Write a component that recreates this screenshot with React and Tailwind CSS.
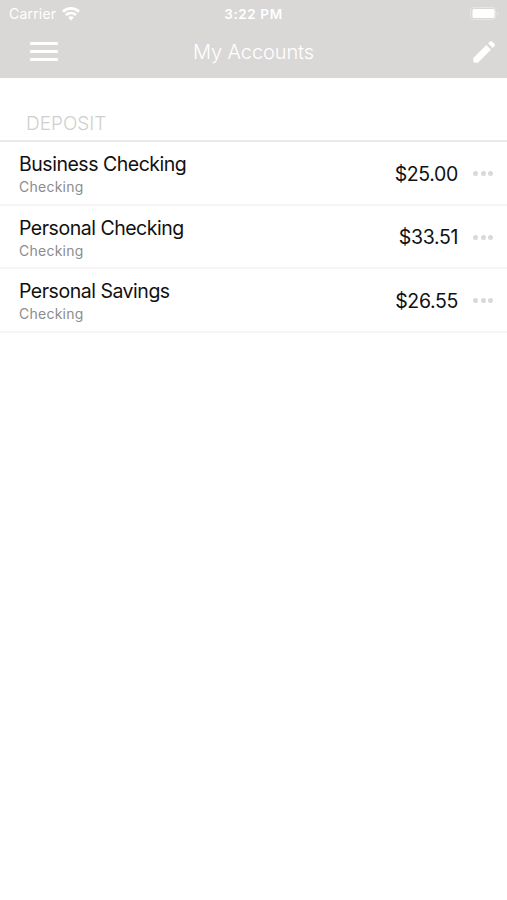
const accounts = [
    { id: 1, name: "Business Checking", type: "Checking", balance: "$25.00" },
    { id: 2, name: "Personal Checking", type: "Checking", balance: "$33.51" },
    { id: 3, name: "Personal Savings", type: "Checking", balance: "$26.55" },
];

function WifiIcon() {
    return (
        <svg width="18" height="14" viewBox="0 0 18 14" fill="none" stroke="white" strokeWidth="2.6">
            <path d="M1 4.7a11.4 11.4 0 0 1 16 0" />
            <path d="M4 8a7.1 7.1 0 0 1 10 0" />
            <path d="M9 13.4 6.2 10.6a4 4 0 0 1 5.6 0z" fill="white" stroke="none" />
        </svg>
    );
}

function BatteryIcon() {
    return (
        <svg width="30" height="14" viewBox="0 0 30 14">
            <rect x="0.5" y="0.5" width="25" height="12" rx="3" fill="none" stroke="white" strokeOpacity="0.35" />
            <rect x="2.5" y="2" width="22" height="9" rx="1.5" fill="white" />
            <path d="M27 4.5c1.6.6 1.6 3.4 0 4z" fill="white" fillOpacity="0.35" />
        </svg>
    );
}

function PencilIcon() {
    return (
        <svg width="24" height="24" viewBox="0 0 24 24" fill="white">
            <path d="M1.8 17.6 14.3 5.1l4.6 4.6L6.4 22.2a2 2 0 0 1-1.4.6H3.2a2 2 0 0 1-2-2V19a2 2 0 0 1 .6-1.4z" />
            <path d="M16.1 3.3 18 1.4a1.5 1.5 0 0 1 2.1 0l2.5 2.5a1.5 1.5 0 0 1 0 2.1l-1.9 1.9z" />
        </svg>
    );
}

function AccountRow({ account }) {
    return (
        <li className="flex h-[63.5px] items-center border-b-2 border-[#f5f5f5] pl-[19px] pr-[14px]">
            <div className="flex-1 pt-[4.5px]">
                <p className="text-[19.5px] leading-6 tracking-[-0.48px] text-[#111111]">{account.name}</p>
                <p className="text-[14px] leading-[22px] tracking-[0.25px] text-[#8c8c8c]">{account.type}</p>
            </div>
            <span className="pt-[3px] text-[19.5px] tracking-[-0.35px] text-[#111111]">{account.balance}</span>
            <button aria-label="More" className="ml-[15px] flex gap-[2.5px] pt-[2px]">
                <span className="size-[5px] rounded-full bg-[#d9d9d9]" />
                <span className="size-[5px] rounded-full bg-[#d9d9d9]" />
                <span className="size-[5px] rounded-full bg-[#d9d9d9]" />
            </button>
        </li>
    );
}

export default function App() {
    return (
        <div className="min-h-screen bg-white font-['Inter',sans-serif]">
            <header className="h-[78px] bg-[#d9d8d7] text-white">
                <div className="grid h-[27px] grid-cols-[1fr_auto_1fr] items-center px-[9px] text-[14px]">
                    <div className="flex items-center gap-[6px]">
                        <span className="tracking-[0.2px]">Carrier</span>
                        <WifiIcon />
                    </div>
                    <span className="pt-px text-[13.5px] font-semibold tracking-[0.6px]">3:22 PM</span>
                    <div className="-mr-0.5 flex justify-end">
                        <BatteryIcon />
                    </div>
                </div>
                <div className="grid h-[49px] grid-cols-[1fr_auto_1fr] items-center px-[11px]">
                    <button aria-label="Menu" className="ml-[19px] flex w-7 flex-col gap-[5px]">
                        <span className="h-[3px] w-7 rounded-[1px] bg-white" />
                        <span className="h-[3px] w-7 rounded-[1px] bg-white" />
                        <span className="h-[3px] w-7 rounded-[1px] bg-white" />
                    </button>
                    <h1 className="text-[20px] font-light tracking-[-0.1px]">My Accounts</h1>
                    <button aria-label="Edit" className="flex justify-end">
                        <PencilIcon />
                    </button>
                </div>
            </header>

            <h2 className="flex h-16 items-end border-b-2 border-[#eaeaea] pb-[2px] pl-[26px] text-[19px] font-light text-[#cfcfcf]">
                DEPOSIT
            </h2>
            <ul>
                {accounts.map((account) => (
                    <AccountRow key={account.id} account={account} />
                ))}
            </ul>
        </div>
    );
}
